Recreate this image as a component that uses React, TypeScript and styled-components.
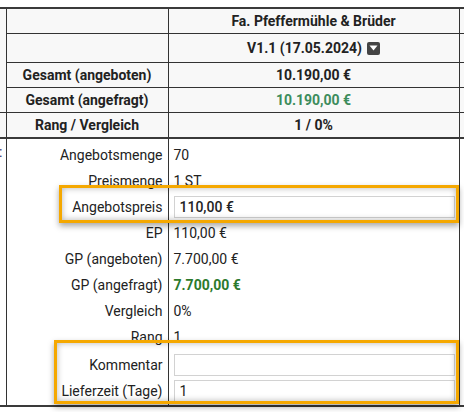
import React from "react";
import styled, { createGlobalStyle } from "styled-components";

const GlobalStyle = createGlobalStyle`
  html, body {
    margin: 0;
    padding: 0;
    background: #fff;
    font-family: Roboto, "Liberation Sans", sans-serif;
    color: #222;
  }
`;

const Page = styled.div`
  position: relative;
  width: 464px;
  height: 412px;
  overflow: hidden;
  padding-top: 7px;
  box-sizing: border-box;
`;

const Table = styled.table`
  margin-left: -94px;
  border-collapse: collapse;
  table-layout: fixed;
  width: 653px;
  border-top: 2px solid #3a3a3a;
  border-bottom: 2px solid #3a3a3a;
`;

const HeadCell = styled.td<{ $tall?: boolean; $edge?: boolean }>`
  background: #f8f8f8;
  height: ${(p) => (p.$tall ? 28 : 24)}px;
  padding: 0 6px;
  text-align: center;
  font-size: 14px;
  font-weight: 700;
  border-left: 1px solid #333;
  border-right: 1px solid #333;
  border-bottom: ${(p) => (p.$edge ? "none" : "1px solid #333")};
  white-space: nowrap;
`;

const CutCell = styled.td<{ $line?: boolean }>`
  background: #f8f8f8;
  border-right: 1px solid #333;
  border-bottom: ${(p) => (p.$line ? "1px solid #333" : "none")};
`;

const LastHeadRow = styled.tr`
  border-bottom: 2px solid #3a3a3a;
`;

const Money = styled.span<{ $green?: boolean }>`
  color: ${(p) => (p.$green ? "#3c8c5c" : "#222")};
`;

const Version = styled.span`
  display: inline-flex;
  align-items: center;
  gap: 5px;
`;

const DropIcon = styled.span`
  display: inline-flex;
  align-items: center;
  justify-content: center;
  width: 13px;
  height: 13px;
  border-radius: 2px;
  background: #444;
`;

const BodyCut = styled.td`
  vertical-align: top;
  text-align: right;
  padding: 5px 3px 0 0;
  font-size: 14px;
  color: #1c2a6a;
  border-right: 1px solid #333;
`;

// top / bottom padding of a body row: first row and the input block get extra air
const Label = styled.td<{ $top: number; $bottom: number }>`
  height: 26px;
  padding: ${(p) => p.$top}px 5px ${(p) => p.$bottom}px 0;
  text-align: right;
  font-size: 14px;
  color: #222;
  border-right: 1px solid #333;
  white-space: nowrap;
`;

const Value = styled.td<{ $top: number; $bottom: number }>`
  height: 26px;
  padding: ${(p) => p.$top}px 5px ${(p) => p.$bottom}px 5px;
  font-size: 14px;
  color: #222;
  border-right: 1px solid #333;
  white-space: nowrap;
`;

const Strong = styled.span`
  font-weight: 700;
  color: #2c7a2c;
`;

const Field = styled.input<{ $bold?: boolean }>`
  display: block;
  box-sizing: border-box;
  width: 281px;
  height: 22px;
  margin: 0;
  padding: 0 5px;
  border: 1px solid #d2d2d2;
  background: #fff;
  font-family: Roboto, "Liberation Sans", sans-serif;
  font-size: 14px;
  font-weight: ${(p) => (p.$bold ? 500 : 400)};
  color: #222;
  outline: none;
`;

const Spot = styled.div<{ $x: number; $y: number; $w: number; $h: number }>`
  position: absolute;
  left: ${(p) => p.$x}px;
  top: ${(p) => p.$y}px;
  width: ${(p) => p.$w}px;
  height: ${(p) => p.$h}px;
  box-sizing: border-box;
  border: 3px solid #f5a800;
  box-shadow: 0 3px 6px rgba(0, 0, 0, 0.35), inset 0 0 6px rgba(0, 0, 0, 0.3);
  pointer-events: none;
`;

const rows: { label: string; value: React.ReactNode; top?: number; bottom?: number }[] = [
  { label: "Angebotsmenge", value: "70", top: 3 },
  { label: "Preismenge", value: "1 ST" },
  { label: "Angebotspreis", value: <Field $bold defaultValue="110,00 €" /> },
  { label: "EP", value: "110,00 €" },
  { label: "GP (angeboten)", value: "7.700,00 €" },
  { label: "GP (angefragt)", value: <Strong>7.700,00 €</Strong> },
  { label: "Vergleich", value: "0%" },
  { label: "Rang", value: "1" },
  { label: "Kommentar", value: <Field defaultValue="" />, top: 2 },
  { label: "Lieferzeit (Tage)", value: <Field defaultValue="1" />, bottom: 1 },
];

const App: React.FC = () => {
  return (
    <Page>
      <GlobalStyle />
      <Table>
        <colgroup>
          <col style={{ width: 100 }} />
          <col style={{ width: 162 }} />
          <col style={{ width: 291 }} />
          <col style={{ width: 100 }} />
        </colgroup>
        <tbody>
          <tr>
            <CutCell />
            <HeadCell />
            <HeadCell>Fa. Pfeffermühle &amp; Brüder</HeadCell>
            <HeadCell />
          </tr>
          <tr>
            <CutCell />
            <HeadCell $tall />
            <HeadCell $tall>
              <Version>
                V1.1 (17.05.2024)
                <DropIcon>
                  <svg width="9" height="6" viewBox="0 0 9 6">
                    <path d="M0.5 0.5 H8.5 L4.5 5.5 Z" fill="#fff" />
                  </svg>
                </DropIcon>
              </Version>
            </HeadCell>
            <HeadCell $tall />
          </tr>
          <tr>
            <CutCell />
            <HeadCell>Gesamt (angeboten)</HeadCell>
            <HeadCell>
              <Money>10.190,00 €</Money>
            </HeadCell>
            <HeadCell />
          </tr>
          <tr>
            <CutCell $line />
            <HeadCell>Gesamt (angefragt)</HeadCell>
            <HeadCell>
              <Money $green>10.190,00 €</Money>
            </HeadCell>
            <HeadCell />
          </tr>
          <LastHeadRow>
            <CutCell />
            <HeadCell $edge>Rang / Vergleich</HeadCell>
            <HeadCell $edge>1 / 0%</HeadCell>
            <HeadCell $edge />
          </LastHeadRow>
          {rows.map((r, i) => (
            <tr key={r.label}>
              {i === 0 && <BodyCut rowSpan={rows.length}>:</BodyCut>}
              <Label $top={r.top ?? 0} $bottom={r.bottom ?? 0}>
                {r.label}
              </Label>
              <Value $top={r.top ?? 0} $bottom={r.bottom ?? 0}>
                {r.value}
              </Value>
              {i === 0 && <Value rowSpan={rows.length} $top={0} $bottom={0} />}
            </tr>
          ))}
        </tbody>
      </Table>
      <Spot $x={59} $y={185} $w={400} $h={38} />
      <Spot $x={54} $y={340} $w={405} $h={64} />
    </Page>
  );
};

export default App;
